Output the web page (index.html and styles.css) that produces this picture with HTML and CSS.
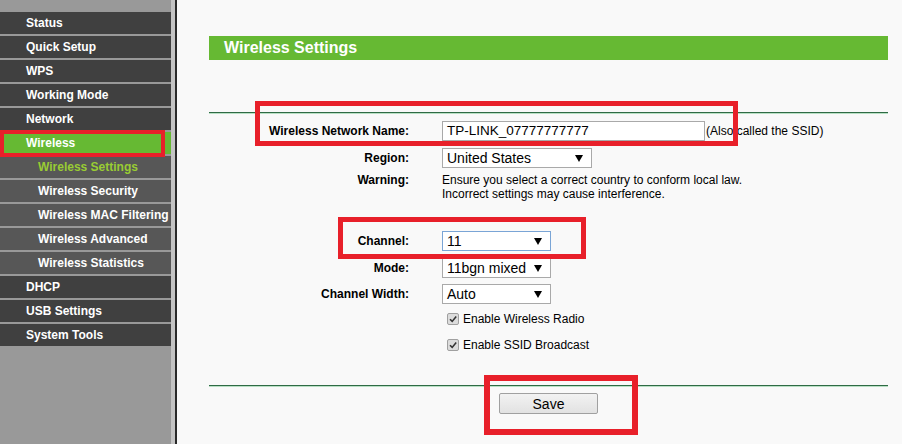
FILE: index.html
```html
<!DOCTYPE html>
<html>
<head>
<meta charset="utf-8">
<link rel="stylesheet" href="styles.css">
</head>
<body>
<div class="page">
  <aside class="sidebar">
    <ul class="menu">
      <li class="item">Status</li>
      <li class="item">Quick Setup</li>
      <li class="item">WPS</li>
      <li class="item">Working Mode</li>
      <li class="item">Network</li>
      <li class="item active">Wireless</li>
      <li class="item sub current">Wireless Settings</li>
      <li class="item sub">Wireless Security</li>
      <li class="item sub">Wireless MAC Filtering</li>
      <li class="item sub">Wireless Advanced</li>
      <li class="item sub">Wireless Statistics</li>
      <li class="item">DHCP</li>
      <li class="item">USB Settings</li>
      <li class="item">System Tools</li>
    </ul>
  </aside>
  <div class="strip"></div>
  <div class="rule-v"></div>
  <main class="content">
    <h1 class="title">Wireless Settings</h1>
    <div class="hr"></div>
    <div class="form">
      <div class="row">
        <label class="lbl">Wireless Network Name:</label>
        <div class="field"><div class="textbox">TP-LINK_07777777777</div><span class="note">(Also called the SSID)</span></div>
      </div>
      <div class="row r-region">
        <label class="lbl">Region:</label>
        <div class="field"><div class="select w150"><span>United States</span><svg class="arrow" width="8" height="7" viewBox="0 0 8 7"><polygon points="0,0 8,0 4,7" fill="#000"/></svg></div></div>
      </div>
      <div class="row r-warn">
        <label class="lbl">Warning:</label>
        <div class="field warn">Ensure you select a correct country to conform local law.<br>Incorrect settings may cause interference.</div>
      </div>
      <div class="row r-channel">
        <label class="lbl">Channel:</label>
        <div class="field"><div class="select w109 focus"><span>11</span><svg class="arrow" width="8" height="7" viewBox="0 0 8 7"><polygon points="0,0 8,0 4,7" fill="#000"/></svg></div></div>
      </div>
      <div class="row r-mode">
        <label class="lbl">Mode:</label>
        <div class="field"><div class="select w109"><span>11bgn mixed</span><svg class="arrow" width="8" height="7" viewBox="0 0 8 7"><polygon points="0,0 8,0 4,7" fill="#000"/></svg></div></div>
      </div>
      <div class="row r-width">
        <label class="lbl">Channel Width:</label>
        <div class="field"><div class="select w109"><span>Auto</span><svg class="arrow" width="8" height="7" viewBox="0 0 8 7"><polygon points="0,0 8,0 4,7" fill="#000"/></svg></div></div>
      </div>
      <div class="row r-check">
        <span class="lbl"></span>
        <div class="field check"><span class="box"><svg width="10" height="10" viewBox="0 0 10 10"><path d="M2 5.2 L4.2 7.4 L8.2 2.6" fill="none" stroke="#333" stroke-width="1.6"/></svg></span>Enable Wireless Radio</div>
      </div>
      <div class="row r-check2">
        <span class="lbl"></span>
        <div class="field check"><span class="box"><svg width="10" height="10" viewBox="0 0 10 10"><path d="M2 5.2 L4.2 7.4 L8.2 2.6" fill="none" stroke="#333" stroke-width="1.6"/></svg></span>Enable SSID Broadcast</div>
      </div>
    </div>
    <div class="hr hr2"></div>
    <div class="actions"><button class="save">Save</button></div>
  </main>

  <div class="mark mark-wireless"></div>
  <div class="mark mark-name"></div>
  <div class="mark mark-channel"></div>
  <div class="mark mark-save"></div>
</div>
</body>
</html>
```

FILE: styles.css
```css
html, body {
  margin: 0;
  padding: 0;
}
body {
  width: 902px;
  height: 444px;
  overflow: hidden;
  font-family: "Liberation Sans", Arial, sans-serif;
  background: #f9f9f9;
}
.page {
  position: relative;
  display: flex;
  height: 444px;
}
.sidebar {
  width: 171px;
  flex: none;
  background: #999999;
  padding-top: 12px;
  box-sizing: border-box;
}
.menu {
  list-style: none;
  margin: 0;
  padding: 0;
}
.item {
  height: 22px;
  line-height: 22px;
  margin-bottom: 2px;
  background: #404040;
  color: #fff;
  font-weight: bold;
  font-size: 12px;
  padding-left: 26px;
  white-space: nowrap;
  overflow: hidden;
}
.item.active {
  background: #66b933;
}
.item.sub {
  background: #575757;
  padding-left: 38px;
}
.item.current {
  color: #99cc33;
}
.strip {
  width: 4px;
  flex: none;
  background: #c4c4c4;
}
.rule-v {
  width: 2px;
  flex: none;
  background: #2a2a2a;
}
.content {
  flex: 1;
  padding: 36px 14px 0 32px;
  background: #f9f9f9;
}
.title {
  margin: 0;
  height: 24px;
  line-height: 24px;
  background: #66b933;
  color: #fff;
  font-size: 16px;
  font-weight: bold;
  padding-left: 15px;
}
.hr {
  margin-top: 52px;
  height: 1px;
  background: #2f6b45;
  border-bottom: 1px solid #b8e0c4;
}
.form {
  padding-top: 7px;
}
.row {
  display: grid;
  grid-template-columns: 200px 1fr;
  column-gap: 33px;
  align-items: center;
  min-height: 20px;
  margin-bottom: 7px;
}
.lbl {
  text-align: right;
  font-weight: bold;
  font-size: 12px;
  color: #000;
}
.field {
  display: flex;
  align-items: center;
  font-size: 12px;
  color: #000;
}
.textbox {
  width: 263px;
  height: 20px;
  box-sizing: border-box;
  border: 1px solid #a9a9a9;
  background: #fff;
  font-size: 13.5px;
  line-height: 18px;
  padding-left: 4px;
  color: #000;
}
.note {
  font-size: 12px;
  margin-left: 1px;
}
.select {
  height: 20px;
  box-sizing: border-box;
  border: 1px solid #a9a9a9;
  background: #fff;
  display: flex;
  align-items: center;
  justify-content: space-between;
  padding: 0 8px 0 4px;
  font-size: 14px;
}
.select.focus {
  border-color: #7aa5d6;
}
.w150 { width: 150px; }
.w109 { width: 109px; }
.r-region { margin-bottom: 5px; }
.r-warn {
  align-items: start;
  margin-bottom: 30px;
}
.r-warn .lbl { line-height: 14px; }
.warn {
  display: block;
  line-height: 14px;
}
.r-channel { margin-bottom: 7px; }
.r-mode { margin-bottom: 6px; }
.r-width { margin-bottom: 5px; }
.r-check { margin-bottom: 6px; }
.check {
  padding-left: 5px;
}
.box {
  width: 12px;
  height: 12px;
  box-sizing: border-box;
  border: 1px solid #a0a0a0;
  border-radius: 2px;
  background: #dcdcdc;
  display: inline-flex;
  align-items: center;
  justify-content: center;
  margin-right: 4px;
}
.hr2 {
  margin-top: 30px;
}
.actions {
  display: flex;
  justify-content: center;
  padding-top: 6px;
}
.save {
  width: 99px;
  height: 21px;
  border: 1px solid #a0a0a0;
  border-radius: 2px;
  background: linear-gradient(#f2f2f2, #e2e2e2);
  font-family: "Liberation Sans", Arial, sans-serif;
  font-size: 14px;
  color: #000;
  padding: 0;
}
.mark {
  position: absolute;
  border: 5px solid #e8202a;
  box-sizing: border-box;
}
.mark-wireless { left: 0; top: 130px; width: 165px; height: 27px; border-width: 4px; }
.mark-name { left: 255px; top: 101px; width: 483px; height: 45px; }
.mark-channel { left: 338px; top: 217px; width: 248px; height: 42px; }
.mark-save { left: 484px; top: 375px; width: 154px; height: 60px; border-width: 6px; }
```
